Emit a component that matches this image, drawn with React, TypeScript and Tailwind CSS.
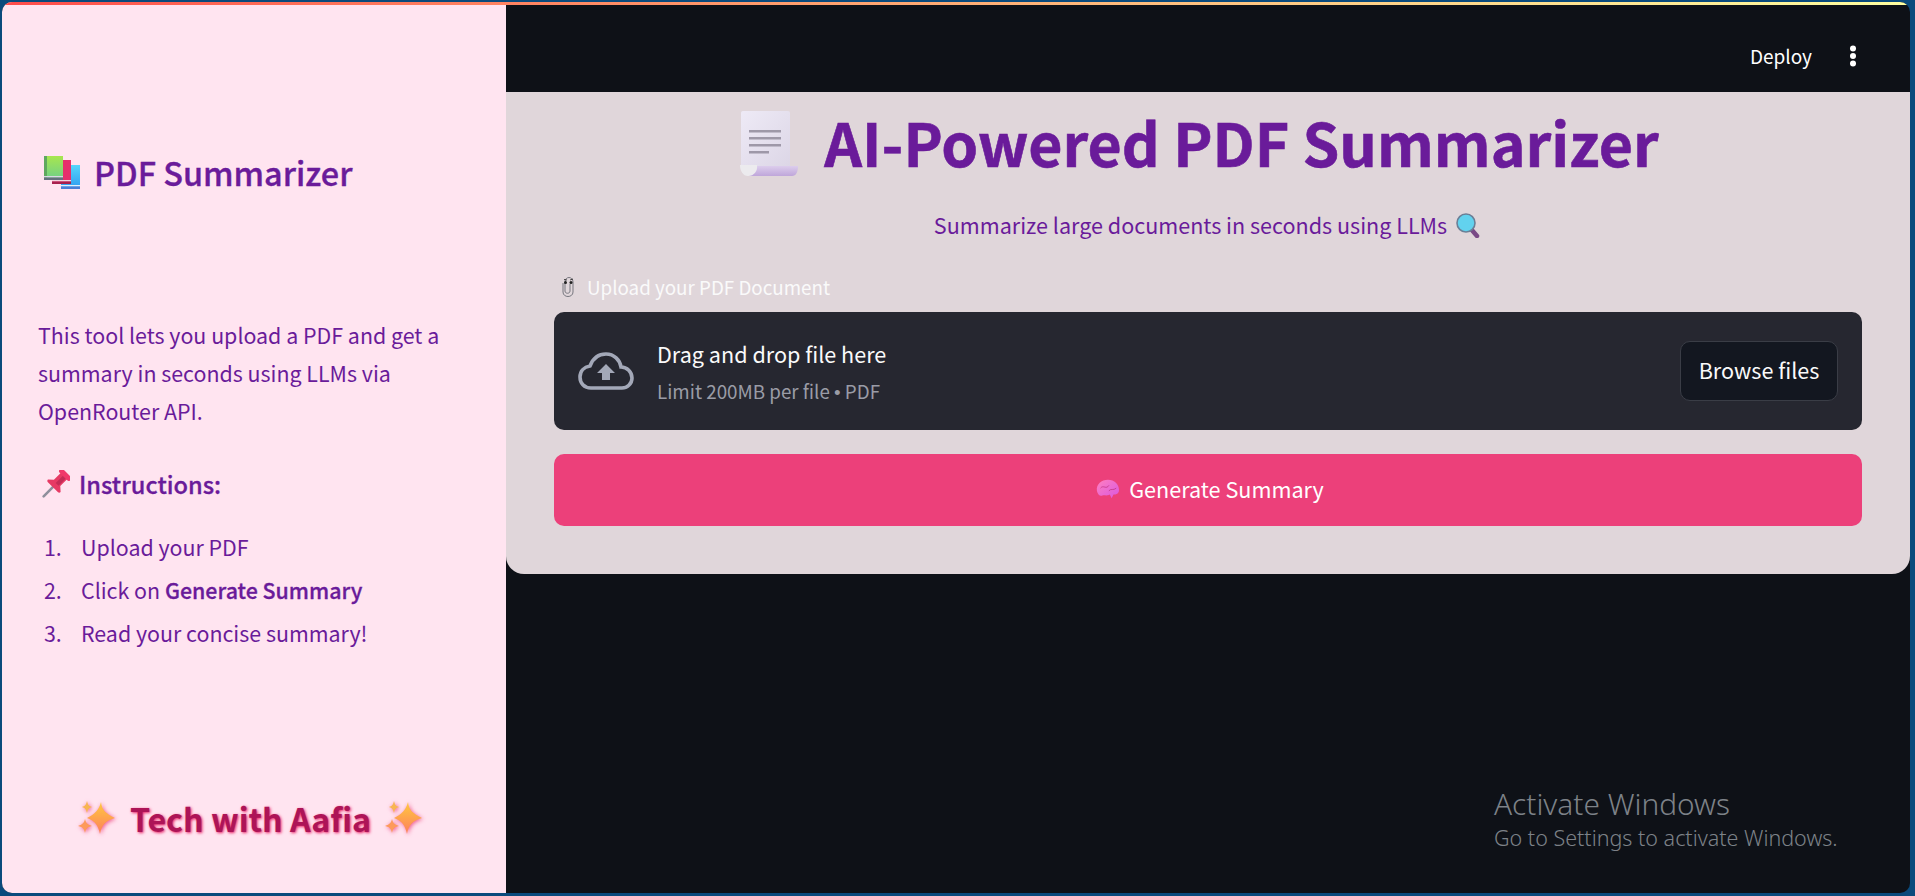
const font = "font-['Noto_Sans_CJK_SC','Noto_Sans',sans-serif]";

function Books() {
  return (
    <svg width="36" height="33" viewBox="0 0 36 33" className="shrink-0">
      <defs>
        <linearGradient id="bookGreen" x1="0" y1="0" x2="0" y2="1">
          <stop offset="0" stopColor="#a8e64e" />
          <stop offset="1" stopColor="#6dcf8a" />
        </linearGradient>
        <linearGradient id="bookBlue" x1="0" y1="0" x2="0" y2="1">
          <stop offset="0" stopColor="#55d6fb" />
          <stop offset="1" stopColor="#2f9bf0" />
        </linearGradient>
      </defs>
      <rect x="17" y="9" width="19" height="24" fill="url(#bookBlue)" />
      <rect x="17" y="29" width="19" height="1.5" fill="#e3effc" />
      <rect x="17" y="30.5" width="19" height="2.5" fill="#4a7fd6" />
      <rect x="8" y="4" width="19" height="24" fill="#e6306c" />
      <rect x="8" y="24" width="19" height="1.5" fill="#f2d5df" />
      <rect x="8" y="25.5" width="19" height="2.5" fill="#a8204e" />
      <rect x="0" y="0" width="19" height="24" fill="url(#bookGreen)" />
      <rect x="0" y="0" width="3" height="24" fill="#5fa85e" />
      <rect x="0" y="20" width="19" height="1.5" fill="#d8d8e4" />
      <rect x="0" y="21.5" width="19" height="2.5" fill="#66707e" />
    </svg>
  );
}

function Pin() {
  return (
    <svg width="28" height="28" viewBox="0 0 28 28" className="shrink-0">
      <g transform="translate(16.5 11.5) rotate(45)">
        <path d="M0 7 V21" stroke="#8f8f9c" strokeWidth="2.6" strokeLinecap="round" />
        <path d="M-4.5 -8 H4.5 V2 L9 6 Q9 8 7 8 H-7 Q-9 8 -9 6 L-4.5 2 Z" fill="#e63a64" />
        <path d="M-1 -8 H3 V3 H-1 Z" fill="#c42c56" />
        <rect x="-7.5" y="-12" width="15" height="5" rx="2.2" fill="#f0386a" />
      </g>
    </svg>
  );
}

function Scroll() {
  return (
    <svg width="59" height="66" viewBox="0 0 59 66" className="mt-[3px] shrink-0">
      <defs>
        <linearGradient id="page" x1="0" y1="0" x2="1" y2="1">
          <stop offset="0" stopColor="#eeeaf6" />
          <stop offset="1" stopColor="#dcd6e6" />
        </linearGradient>
        <linearGradient id="roll" x1="0" y1="0" x2="0" y2="1">
          <stop offset="0" stopColor="#dccdec" />
          <stop offset="1" stopColor="#bfa6da" />
        </linearGradient>
      </defs>
      <path d="M2 2 Q2 0 4 0 H49 Q51 0 51 2 V56 H2 Z" fill="url(#page)" />
      <path d="M14 55 H59 C59 61 57 65 53 65 H10 Z" fill="url(#roll)" />
      <path d="M1 54 H18 C19 60 15 65 9 65 C4 65 1 60 1 54 Z" fill="#ecebee" />
      <rect x="10" y="19" width="32" height="2.5" fill="#9e98a8" />
      <rect x="10" y="26" width="32" height="2.5" fill="#9e98a8" />
      <rect x="10" y="33" width="32" height="2.5" fill="#9e98a8" />
      <rect x="10" y="40" width="20" height="2.5" fill="#9e98a8" />
    </svg>
  );
}

function Magnifier() {
  return (
    <svg width="24" height="25" viewBox="0 0 24 25" className="shrink-0">
      <path d="M15 16 L21 23" stroke="#7a4a86" strokeWidth="4.5" strokeLinecap="round" />
      <circle cx="10" cy="10" r="9" fill="#62d2ee" stroke="#6b7f96" strokeWidth="1.6" />
    </svg>
  );
}

function Clip() {
  return (
    <svg width="14" height="22" viewBox="0 0 14 22" className="shrink-0">
      <path d="M2 7 V16 C2 22 12 22 12 16 V6 C12 0 4 0 4 6 V15 C4 18 9 18 9 15 V8" fill="none" stroke="#77777f" strokeWidth="1" />
      <circle cx="4.5" cy="6.5" r="1.5" fill="#222" />
      <circle cx="10" cy="6.5" r="1.5" fill="#222" />
      <path d="M3 3.5 L6 4 M9 4 L12 3" stroke="#222" strokeWidth="0.8" />
    </svg>
  );
}

function Brain() {
  return (
    <svg width="23" height="21" viewBox="0 0 25 21" className="shrink-0">
      <defs>
        <linearGradient id="brain" x1="0" y1="0" x2="1" y2="1">
          <stop offset="0" stopColor="#ff7fc0" />
          <stop offset="1" stopColor="#d957e0" />
        </linearGradient>
      </defs>
      <path d="M1 12 C0 5 6 0 13 0 C20 0 25 5 25 11 C25 15 22 16 19 16 L17 20 L15 16 C11 18 9 16 7 17 C4 18 2 16 1 12 Z" fill="url(#brain)" />
      <path d="M5 9 C8 5 11 11 14 6 M14 12 C16 9 19 12 22 9" fill="none" stroke="#c93d90" strokeWidth="1" />
    </svg>
  );
}

function Sparkles() {
  return (
    <svg width="38" height="36" viewBox="0 0 38 36" className="shrink-0 drop-shadow-[1px_1px_2px_rgba(233,30,99,0.7)]">
      <defs>
        <linearGradient id="spark" x1="0" y1="0" x2="0" y2="1">
          <stop offset="0" stopColor="#ffc93f" />
          <stop offset="1" stopColor="#fd7f5c" />
        </linearGradient>
      </defs>
      <path d="M23 2 C24 10 27 13 37 18 C27 21 24 25 22 34 C20 25 17 21 9 18 C17 14 21 10 23 2 Z" fill="url(#spark)" />
      <path d="M9 1 C10 5 11 6 14 7 C11 8 10 9 9 13 C8 9 7 8 4 7 C7 6 8 5 9 1 Z" fill="#f8b552" />
      <path d="M7 19 C8 23 9 24 14 26 C9 27 8 29 7 33 C6 29 5 27 0 26 C5 24 6 23 7 19 Z" fill="#fd9a5a" />
    </svg>
  );
}

export default function App() {
  return (
    <div className={`${font} h-[896px] w-full overflow-hidden bg-[#0a4a7c] pt-[2px] pr-[5px] pb-[3px] pl-[2px]`}>
      <div className="relative flex h-full overflow-hidden rounded-[10px] bg-[#0e1117]">
        {/* top gradient line */}
        <div className="absolute inset-x-0 top-0 z-10 h-[3px] bg-gradient-to-r from-[#ff4b4b] to-[#ffffa0]" />

        {/* Sidebar */}
        <aside className="flex w-[504px] shrink-0 flex-col bg-[#ffe4f0] pl-[36px] pr-[30px] text-[#6a1b9a]">
          <div className="mt-[146px] flex h-[48px] items-center gap-[14px] pl-[6px]">
            <Books />
            <h2 className="text-[32.4px] leading-[48px] font-medium [-webkit-text-stroke:0.35px_#6a1b9a]">PDF Summarizer</h2>
          </div>
          <p className="mt-[120px] text-[21.4px] leading-[38px]">
            This tool lets you upload a PDF and get a summary in seconds using LLMs via OpenRouter API.
          </p>
          <div className="mt-[35px] flex h-[38px] items-center gap-[9px] pl-[4px]">
            <Pin />
            <h3 className="text-[23.6px] leading-[38px] font-medium [-webkit-text-stroke:0.3px_#6a1b9a]">Instructions:</h3>
          </div>
          <ol className="mt-[25px] flex flex-col gap-[5px] text-[21.4px] leading-[38px]">
            <li className="flex"><span className="w-[43px] pl-[6px]">1.</span>Upload your PDF</li>
            <li className="flex"><span className="w-[43px] pl-[6px]">2.</span><span>Click on <strong className="font-medium [-webkit-text-stroke:0.3px_#6a1b9a]">Generate Summary</strong></span></li>
            <li className="flex"><span className="w-[43px] pl-[6px]">3.</span>Read your concise summary!</li>
          </ol>
          <div className="mt-[142px] flex items-center justify-center gap-[14px] pr-[13px] text-[32.2px] font-bold text-[#ad1457] [text-shadow:1px_1px_3px_#e91e63]">
            <Sparkles />
            <span>Tech with Aafia</span>
            <Sparkles />
          </div>
        </aside>

        {/* Main */}
        <main className="relative min-w-0 flex-1">
          <header className="flex h-[90px] items-center justify-end pr-[53px] pt-[18px] text-white">
            <span className="text-[19px]">Deploy</span>
            <svg width="8" height="22" viewBox="0 0 8 22" className="ml-[37px]" fill="#fff">
              <circle cx="4" cy="3.5" r="3" />
              <circle cx="4" cy="11" r="3" />
              <circle cx="4" cy="18.5" r="3" />
            </svg>
          </header>

          <section className="flex h-[482px] flex-col rounded-b-[18px] bg-[#e0d6da] px-[48px]">
            <div className="mt-[8px] flex h-[84px] items-center justify-center gap-[26px] pr-[18px]">
              <Scroll />
              <h1 className="text-[59px] leading-[84px] font-bold text-[#6a1b9a] [-webkit-text-stroke:0.6px_#6a1b9a]">AI-Powered PDF Summarizer</h1>
            </div>
            <div className="mt-[23px] flex h-[36px] items-center justify-center gap-[9px] pr-[2px] text-[21.55px] text-[#6a1b9a]">
              <span>Summarize large documents in seconds using LLMs</span>
              <Magnifier />
            </div>
            <div className="mt-[30px] flex h-[28px] items-center gap-[12px] pl-[7px] text-[18.8px] text-[#fafafa]">
              <Clip />
              <span>Upload your PDF Document</span>
            </div>
            <div className="mt-[11px] flex h-[118px] items-center rounded-[10px] bg-[#262730] pr-[24px] pl-[24px]">
              <svg width="56" height="38" viewBox="0 0 56 38" className="shrink-0" fill="none">
                <path d="M13 36 C6 36 2 31 2 25 C2 19 6 15 12 14 C15 6 21 2 28 2 C36 2 42 8 43 15 C49 15 54 20 54 26 C54 32 49 36 44 36 Z" stroke="#a3a8b8" strokeWidth="3.6" />
                <path d="M28 12 L37 21 H32 V28 H24 V21 H19 Z" fill="#a3a8b8" />
              </svg>
              <div className="ml-[23px] flex translate-y-[1px] flex-col">
                <span className="text-[21.6px] leading-[36px] text-[#fafafa]">Drag and drop file here</span>
                <span className="mt-[3px] text-[18.8px] leading-[32px] text-[#9a9ca6]">
                  Limit 200MB per file <span className="font-['Liberation_Sans',sans-serif]">•</span> PDF
                </span>
              </div>
              <button className="ml-auto h-[60px] w-[158px] rounded-[10px] border border-[#3a3d46] bg-[#131720] pb-[2px] text-[21.6px] text-[#fafafa]">
                Browse files
              </button>
            </div>
            <button className="mt-[24px] flex h-[72px] items-center justify-center gap-[10px] rounded-[10px] bg-[#ec407a] pb-[2px] pl-[4px] text-[21.6px] text-white">
              <Brain />
              <span>Generate Summary</span>
            </button>
          </section>

          <div className="absolute top-[784px] left-[988px] w-[440px] font-['Noto_Sans',sans-serif] font-light text-[#7d8288]">
            <p className="text-[29.8px] leading-[36px]">Activate Windows</p>
            <p className="mt-[2px] text-[21.5px] leading-[28px]">Go to Settings to activate Windows.</p>
          </div>
        </main>
      </div>
    </div>
  );
}
